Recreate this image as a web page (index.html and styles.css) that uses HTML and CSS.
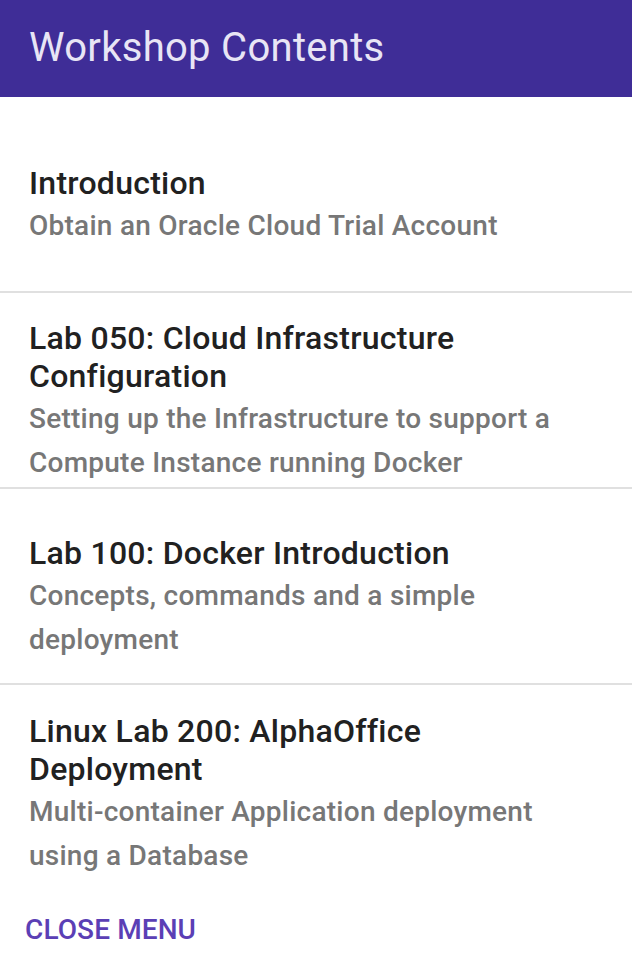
FILE: index.html
```html
<!DOCTYPE html>
<html>
<head>
<meta charset="utf-8">
<link rel="stylesheet" href="styles.css">
</head>
<body>
<div class="drawer">
  <header class="appbar"><h1 class="appbar-title">Workshop Contents</h1></header>
  <ul class="list">
    <li class="item">
      <div class="primary">Introduction</div>
      <div class="secondary">Obtain an Oracle Cloud Trial Account</div>
    </li>
    <li class="item">
      <div class="primary">Lab 050: Cloud Infrastructure Configuration</div>
      <div class="secondary">Setting up the Infrastructure to support a Compute Instance running Docker</div>
    </li>
    <li class="item">
      <div class="primary">Lab 100: Docker Introduction</div>
      <div class="secondary">Concepts, commands and a simple deployment</div>
    </li>
    <li class="item last">
      <div class="primary">Linux Lab 200: AlphaOffice Deployment</div>
      <div class="secondary">Multi-container Application deployment using a Database</div>
    </li>
  </ul>
  <button class="close-btn">Close Menu</button>
</div>
</body>
</html>
```
FILE: styles.css
```css
* { box-sizing: border-box; }
html, body { margin: 0; padding: 0; background: #fff; }
body { font-family: Roboto, "Noto Sans", sans-serif; width: 632px; }
.drawer { display: flex; flex-direction: column; }
.appbar {
  background: #3f2d97;
  height: 97px;
  display: flex;
  align-items: center;
  padding: 0 29px;
}
.appbar-title {
  margin: 0;
  font-size: 40px;
  font-weight: 400;
  color: #e8e5f5;
  letter-spacing: 0.3px;
  padding-bottom: 2px;
}
.list { list-style: none; margin: 0; padding: 0; }
.item {
  min-height: 196px;
  display: flex;
  flex-direction: column;
  justify-content: center;
  padding: 24px 48px 0 29px;
  border-bottom: 2px solid #e0e0e0;
}
.item.last { border-bottom: none; }
.primary {
  font-size: 32px;
  line-height: 38px;
  font-weight: 500;
  color: #212121;
  letter-spacing: 0.25px;
}
.secondary {
  margin-top: 2px;
  font-size: 28px;
  line-height: 44px;
  font-weight: 500;
  color: #777;
  letter-spacing: 0.25px;
}
.close-btn {
  align-self: flex-start;
  margin: 24px 0 0 12px;
  padding: 8px 13px;
  border: none;
  background: none;
  font-family: Roboto, "Noto Sans", sans-serif;
  font-size: 28px;
  font-weight: 500;
  text-transform: uppercase;
  color: #5b3fb5;
  letter-spacing: 0.1px;
}
```
